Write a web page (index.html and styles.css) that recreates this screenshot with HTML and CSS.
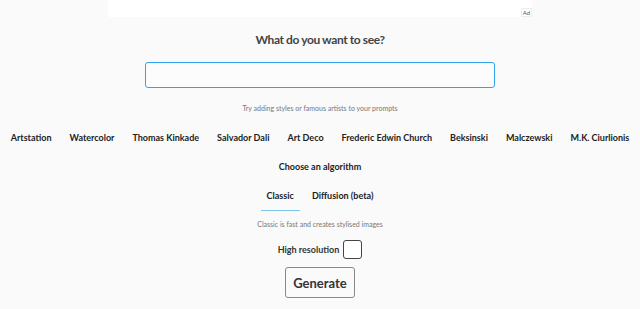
FILE: index.html
```html
<!DOCTYPE html>
<html lang="en">
<head>
    <meta charset="UTF-8">
    <meta name="viewport" content="width=device-width, initial-scale=1.0">
    <title>Text to Image</title>
    <link rel="stylesheet" href="styles.css">
</head>
<body>
    <div class="ad-slot">
        <span class="ad-label">Ad</span>
    </div>

    <main class="generator">
        <h1 class="prompt-title">What do you want to see?</h1>
        <input type="text" class="prompt-input" id="prompt">
        <p class="hint">Try adding styles or famous artists to your prompts</p>

        <div class="styles-row">
            <span class="style-tag">Artstation</span>
            <span class="style-tag">Watercolor</span>
            <span class="style-tag">Thomas Kinkade</span>
            <span class="style-tag">Salvador Dali</span>
            <span class="style-tag">Art Deco</span>
            <span class="style-tag">Frederic Edwin Church</span>
            <span class="style-tag">Beksinski</span>
            <span class="style-tag">Malczewski</span>
            <span class="style-tag">M.K. Ciurlionis</span>
        </div>

        <div class="algo-title">Choose an algorithm</div>
        <div class="tabs">
            <button class="tab active">Classic</button>
            <button class="tab">Diffusion (beta)</button>
        </div>
        <p class="algo-desc">Classic is fast and creates stylised images</p>

        <label class="hires">
            High resolution
            <input type="checkbox" class="hires-box">
        </label>

        <button class="generate-btn">Generate</button>
    </main>
</body>
</html>
```

FILE: styles.css
```css
* {
    margin: 0;
    padding: 0;
    box-sizing: border-box;
}

body {
    font-family: 'Lato', 'Open Sans', sans-serif;
    background: #fafafa;
    color: #333;
}

/* Ad slot */
.ad-slot {
    width: 424px;
    height: 17px;
    margin: 0 auto;
    background: #ffffff;
    position: relative;
}

.ad-label {
    position: absolute;
    right: 0;
    bottom: 0;
    font-size: 6px;
    line-height: 7px;
    padding: 0 1px;
    color: #555;
    background: #fff;
    border: 1px solid #eee;
}

/* Main */
.generator {
    display: flex;
    flex-direction: column;
    align-items: center;
}

.prompt-title {
    font-size: 12px;
    font-weight: 700;
    letter-spacing: -0.4px;
    color: #444;
    margin-top: 14px;
    line-height: 18px;
}

.prompt-input {
    width: 350px;
    height: 26px;
    margin-top: 13px;
    border: 1px solid #2fa4ec;
    border-radius: 3px;
    background: #fcfcfc;
    outline: none;
}

.hint {
    font-size: 7px;
    color: #777;
    margin-top: 15px;
    line-height: 10px;
}

.styles-row {
    display: flex;
    justify-content: center;
    gap: 18px;
    width: 100%;
    margin-top: 18px;
}

.style-tag {
    font-size: 9px;
    font-weight: 700;
    color: #222;
    line-height: 14px;
    white-space: nowrap;
}

.algo-title {
    font-size: 9px;
    font-weight: 700;
    color: #222;
    margin-top: 15px;
    line-height: 14px;
}

.tabs {
    display: flex;
    gap: 6px;
    margin-top: 14px;
}

.tab {
    font-family: inherit;
    font-size: 9px;
    font-weight: 700;
    color: #222;
    background: none;
    border: none;
    border-bottom: 1px solid transparent;
    padding: 2px 6px 8px;
    line-height: 12px;
}

.tab.active {
    border-bottom-color: #7cc4e8;
}

.algo-desc {
    font-size: 7px;
    color: #777;
    margin-top: 8px;
    line-height: 10px;
}

.hires {
    display: flex;
    align-items: center;
    gap: 4px;
    font-size: 9px;
    font-weight: 700;
    color: #333;
    margin-top: 11px;
}

.hires-box {
    appearance: none;
    width: 19px;
    height: 19px;
    border: 1px solid #444;
    border-radius: 3px;
    background: #fff;
}

.generate-btn {
    font-family: inherit;
    font-size: 13px;
    font-weight: 700;
    color: #333;
    background: #fafafa;
    border: 1px solid #888;
    border-radius: 3px;
    padding: 0 7px;
    height: 31px;
    margin-top: 8px;
}
```
